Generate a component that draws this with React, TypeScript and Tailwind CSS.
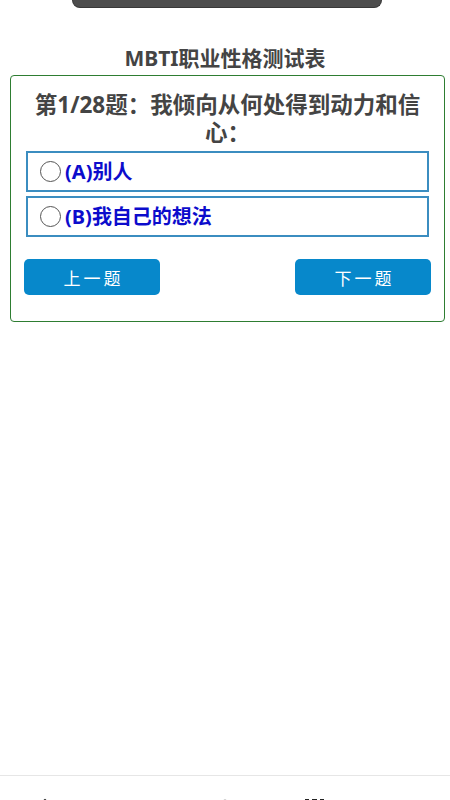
import React from 'react';

const options = [
  { key: 'A', text: '别人' },
  { key: 'B', text: '我自己的想法' },
];

function Radio() {
  return <span className="inline-block w-[21px] h-[21px] shrink-0 rounded-full border-[1.5px] border-[#555] bg-white" />;
}

export default function App() {
  return (
    <div className="h-[800px] flex flex-col bg-white overflow-hidden font-['Noto_Sans','Noto_Sans_CJK_SC',sans-serif]">
      {/* top pill */}
      <div className="ml-[72px] w-[310px] h-[8px] shrink-0 bg-[#4d4d4d] rounded-b-[12px] border-x border-b border-[#383838]" />

      <h1 className="mt-[36px] text-center text-[21px] leading-[28px] font-bold text-[#444]">MBTI职业性格测试表</h1>

      <div className="ml-[10px] mt-[3px] w-[435px] border border-[#2e7d32] rounded-[4px] px-[13px] pt-[15px] pb-[26px]">
        <p className="px-[4px] text-center text-[22.5px] leading-[28px] font-bold text-[#444]">
          第1/28题：我倾向从何处得到动力和信心：
        </p>

        <div className="mx-[2px] mt-[4px] flex flex-col gap-[4px]">
          {options.map((o) => (
            <label
              key={o.key}
              className="h-[41px] flex items-center gap-[4px] pl-[12px] border-2 border-[#3b8dc0] text-[20px] leading-[28px] font-bold text-[#0c0ccc]"
            >
              <Radio />
              <span>({o.key}){o.text}</span>
            </label>
          ))}
        </div>

        <div className="mt-[22px] flex justify-between">
          <button className="w-[136px] h-[36px] pt-[3px] rounded-[5px] bg-[#0788cb] text-white text-[17px] tracking-[3px] pl-[3px]">
            上一题
          </button>
          <button className="w-[136px] h-[36px] pt-[3px] rounded-[5px] bg-[#0788cb] text-white text-[17px] tracking-[3px] pl-[3px]">
            下一题
          </button>
        </div>
      </div>

      {/* bottom nav, only the top of the icons is visible */}
      <div className="mt-auto h-[25px] shrink-0 border-t border-[#e6e6e6] grid grid-cols-5 overflow-hidden">
        <div className="flex justify-center pt-[21px]">
          <svg width="24" height="24" viewBox="0 0 24 24" fill="none" stroke="#222" strokeWidth="2">
            <path d="M3 11 12 3l9 8" />
          </svg>
        </div>
        <div className="flex justify-center pt-[21px] pl-[16px]">
          <svg width="24" height="24" viewBox="0 0 24 24" fill="none" stroke="#222" strokeWidth="2">
            <path d="M12 3v4" />
          </svg>
        </div>
        <div className="flex justify-center pt-[21px]">
          <svg width="24" height="24" viewBox="0 0 24 24" fill="none" stroke="#222" strokeWidth="2.5">
            <circle cx="12" cy="8" r="4" />
          </svg>
        </div>
        <div className="flex justify-center pt-[21px]">
          <svg width="24" height="24" viewBox="0 0 24 24" fill="#222">
            <rect x="2" y="2" width="4" height="8" />
            <rect x="9" y="2" width="5" height="8" />
            <rect x="17" y="2" width="4" height="8" />
          </svg>
        </div>
        <div />
      </div>
    </div>
  );
}
